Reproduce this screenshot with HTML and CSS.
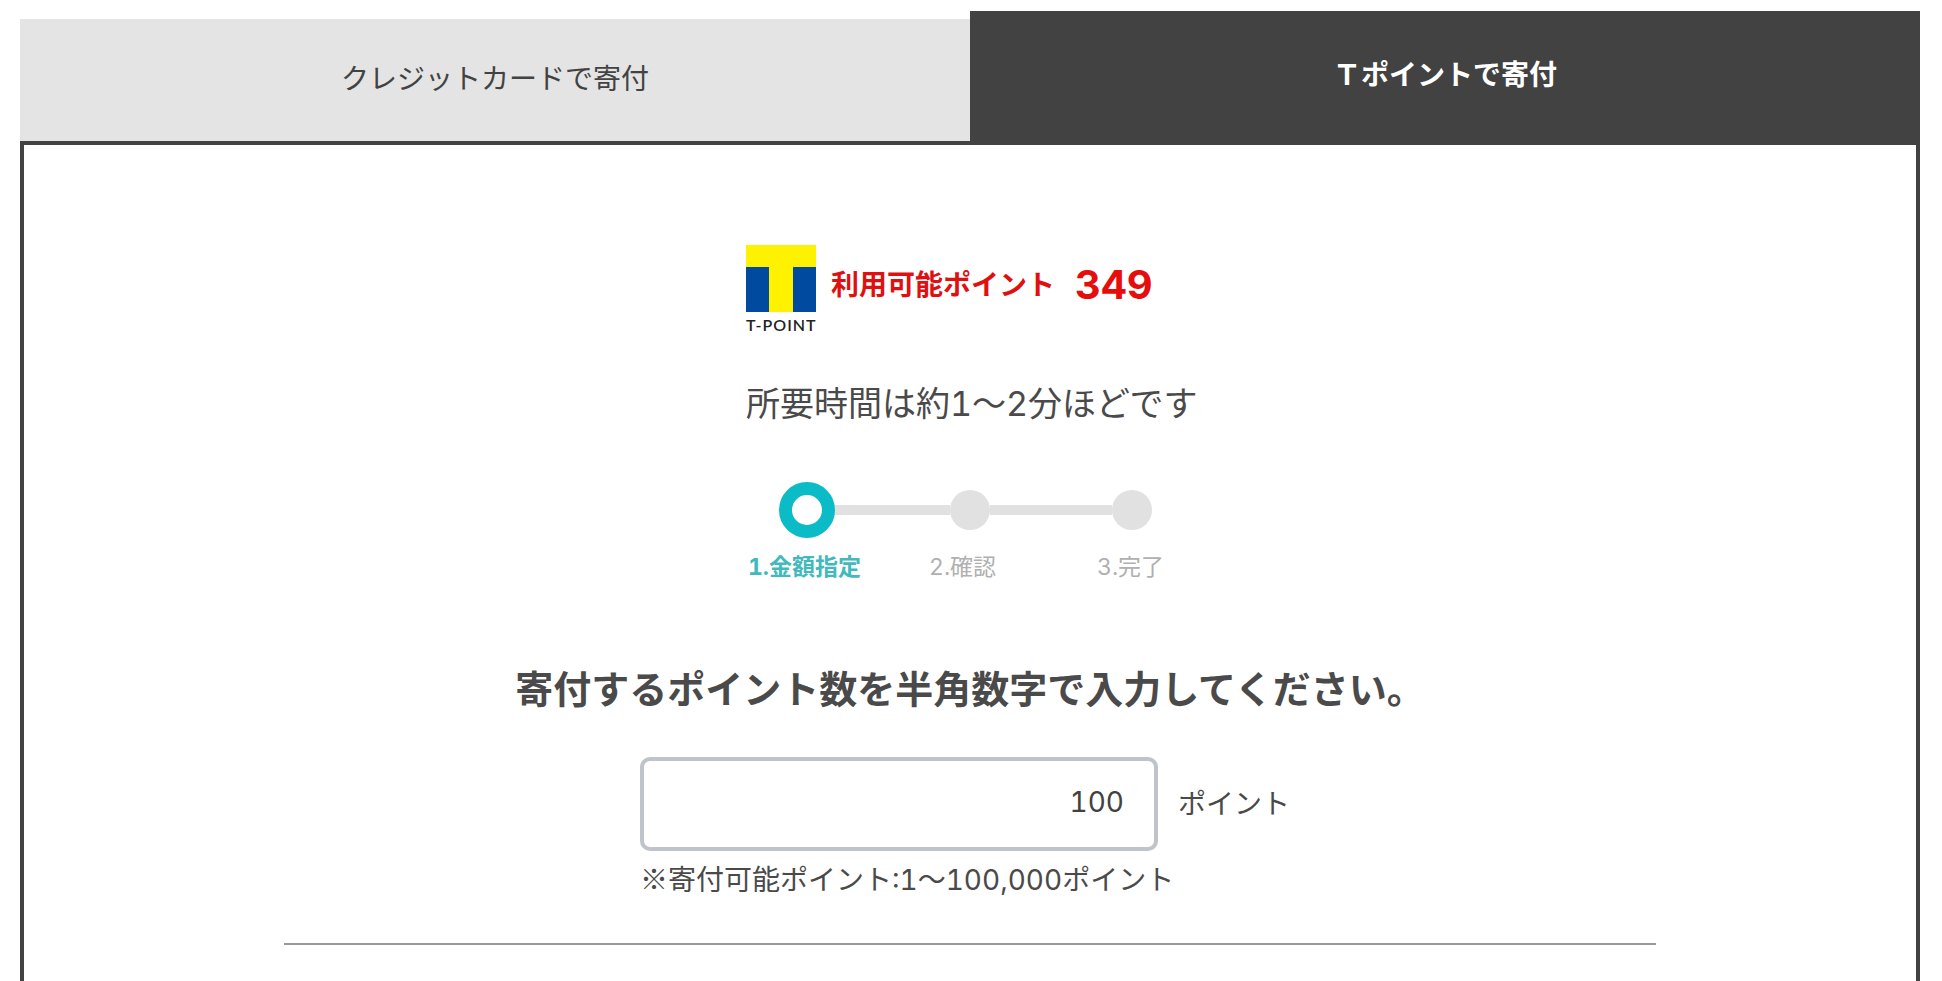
FILE: index.html
```html
<!DOCTYPE html>
<html lang="ja">
<head>
  <meta charset="UTF-8">
  <meta name="viewport" content="width=device-width, initial-scale=1">
  <title>Tポイントで寄付</title>
  <link rel="stylesheet" href="styles.css">
</head>
<body>
  <div class="tabs" role="tablist">
    <button class="tab" type="button" role="tab" aria-selected="false">クレジットカードで寄付</button>
    <button class="tab active" type="button" role="tab" aria-selected="true">Ｔポイントで寄付</button>
  </div>

  <main class="panel">
    <div class="intro">
      <div class="balance">
        <svg class="logo" viewBox="0 0 70 86" role="img" aria-label="T-POINT">
          <rect width="70" height="67" fill="#fff200"/>
          <rect y="22" width="23" height="45" fill="#004aa0"/>
          <rect x="47" y="22" width="23" height="45" fill="#004aa0"/>
          <text class="logo-text" x="0" y="86">T-POINT</text>
        </svg>
        <span class="balance-label">利用可能ポイント</span>
        <span class="balance-value">349</span>
      </div>

      <p class="time">所要時間は約1～2分ほどです</p>

      <div class="track" aria-hidden="true">
        <span class="dot current"></span>
        <span class="line"></span>
        <span class="dot"></span>
        <span class="line"></span>
        <span class="dot"></span>
      </div>
      <div class="steps">
        <span class="step current">1.金額指定</span>
        <span class="step">2.確認</span>
        <span class="step">3.完了</span>
      </div>
    </div>

    <form class="donate">
      <label class="title" for="point">寄付するポイント数を半角数字で入力してください。</label>
      <div class="field">
        <div class="field-row">
          <input class="point-input" type="text" id="point" name="point" inputmode="numeric" value="100">
          <span class="unit">ポイント</span>
        </div>
        <p class="note"><span class="mark">※</span>寄付可能ポイント:1～100,000ポイント</p>
      </div>
    </form>

    <hr class="divider">
  </main>
</body>
</html>
```

FILE: styles.css
```css
* { box-sizing: border-box; }
body {
  margin: 0;
  padding: 11px 22px 0 20px;
  background-color: #fff;
  color: #4a4a4a;
  font-family: Inter, "Noto Sans CJK JP", sans-serif;
  font-size: 28px;
  font-variant-numeric: tabular-nums;
}
p { margin: 0; }

/* tabs */
.tabs { display: flex; align-items: flex-end; }
.tab {
  flex: 1; padding: 40px 20px 42px;
  border: none; cursor: pointer;
  background-color: #e4e4e4; color: #424242;
  font-family: inherit; font-size: 28px; line-height: 40px;
}
.tab.active {
  padding: 44px 20px 46px;
  background-color: #424242; color: #fff; font-weight: bold;
}

.panel {
  display: flex; flex-direction: column; align-items: center;
  min-height: calc(100vh - 141px);
  padding: 100px 20px 36px;
  border: 4px solid #424242; border-bottom: none;
}

/* balance and progress */
.intro { width: 448px; }
.balance { display: flex; align-items: flex-start; line-height: 80px; color: #e01010; font-weight: bold; }
.logo { width: 70px; height: 86px; margin-right: 15px; overflow: visible; }
.logo-text { font-family: Lato, sans-serif; font-size: 16px; font-weight: 600; letter-spacing: 1px; fill: #222; }
.balance-label { margin-right: 20px; }
.balance-value { font-size: 40px; color: #e60d0d; }
.time { margin-top: 48px; font-size: 34px; line-height: 50px; white-space: nowrap; }

.track { display: flex; align-items: center; width: 365px; margin: 53px 0 0 41px; }
.dot { width: 40px; height: 40px; border-radius: 50%; background-color: #e1e1e1; }
/* bigger ring, but takes the same room on the line as the other dots */
.dot.current {
  position: relative; z-index: 1;
  width: 56px; height: 56px; margin: 0 -8px;
  border: 13px solid #0bbcc6; background-color: #fff;
}
.line { flex: 1; height: 10px; background-color: #e1e1e1; }
.steps {
  display: grid; grid-template-columns: 181px 168px auto;
  margin-top: 14px; padding-left: 2px;
  font-size: 23px; line-height: 30px; color: #b0b0b0;
}
.step.current { color: #42b9bd; font-weight: bold; }

/* form */
.donate { display: flex; flex-direction: column; align-items: center; margin-top: 82px; }
.title { font-size: 38px; font-weight: bold; line-height: 50px; }
.field { width: 660px; max-width: 100%; margin-top: 43px; }
.field-row { display: flex; align-items: center; gap: 20px; }
.point-input {
  width: 518px; height: 94px; padding: 0 30px 4px;
  border: 4px solid #bfc4cc; border-radius: 10px;
  background-color: #fff; color: #424242;
  font-family: inherit; font-size: 28px; text-align: right;
  font-variant-numeric: tabular-nums;
}
.unit { line-height: 40px; }
.note { margin-top: 9px; line-height: 40px; }
.mark { font-family: "Noto Sans CJK JP", sans-serif; line-height: 1; }
.divider {
  width: 100%; max-width: 1372px; margin: 43px 0 0;
  border: none; border-top: 2px solid #999;
}
```
